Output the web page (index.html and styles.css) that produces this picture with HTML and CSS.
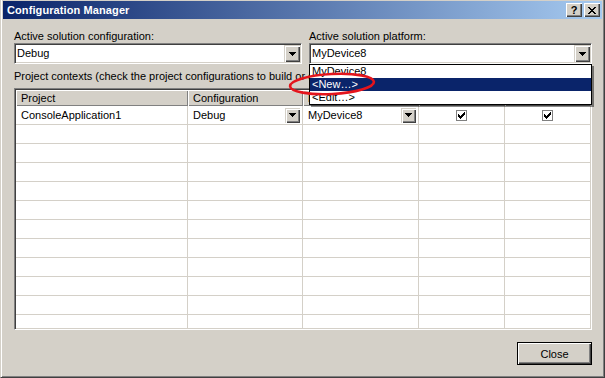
FILE: index.html
```html
<!DOCTYPE html>
<html>
<head>
<meta charset="utf-8">
<link rel="stylesheet" href="styles.css">
</head>
<body>
<div class="window">
  <div class="titlebar">
    <span class="title">Configuration Manager</span>
    <div class="tbtns">
      <span class="tbtn help">?</span>
      <span class="tbtn"><svg width="8" height="7" viewBox="0 0 8 7" shape-rendering="crispEdges"><path d="M0 0h2v1H0zM6 0h2v1H6zM1 1h2v1H1zM5 1h2v1H5zM2 2h4v1H2zM3 3h2v1H3zM2 4h4v1H2zM1 5h2v1H1zM5 5h2v1H5zM0 6h2v1H0zM6 6h2v1H6z" fill="#000"/></svg></span>
    </div>
  </div>
  <div class="content">
    <div class="top">
      <div class="field f-left">
        <div class="lbl">Active solution configuration:</div>
        <div class="combo"><span class="ctext">Debug</span><span class="ddbtn"><svg width="7" height="4" viewBox="0 0 7 4" shape-rendering="crispEdges"><path d="M0 0h7v1H0zM1 1h5v1H1zM2 2h3v1H2zM3 3h1v1H3z" fill="#000"/></svg></span></div>
      </div>
      <div class="field f-right">
        <div class="lbl">Active solution platform:</div>
        <div class="combo"><span class="ctext">MyDevice8</span><span class="ddbtn"><svg width="7" height="4" viewBox="0 0 7 4" shape-rendering="crispEdges"><path d="M0 0h7v1H0zM1 1h5v1H1zM2 2h3v1H2zM3 3h1v1H3z" fill="#000"/></svg></span></div>
      </div>
    </div>
    <div class="ctxlbl">Project contexts (check the project configurations to build or deploy):</div>
    <div class="grid">
      <div class="hcell">Project</div>
      <div class="hcell">Configuration</div>
      <div class="hcell">Platform</div>
      <div class="hcell">Build</div>
      <div class="hcell">Deploy</div>

      <div class="cell">ConsoleApplication1</div>
      <div class="cell cellcombo"><span>Debug</span><span class="ddbtn small"><svg width="7" height="4" viewBox="0 0 7 4" shape-rendering="crispEdges"><path d="M0 0h7v1H0zM1 1h5v1H1zM2 2h3v1H2zM3 3h1v1H3z" fill="#000"/></svg></span></div>
      <div class="cell cellcombo"><span>MyDevice8</span><span class="ddbtn small"><svg width="7" height="4" viewBox="0 0 7 4" shape-rendering="crispEdges"><path d="M0 0h7v1H0zM1 1h5v1H1zM2 2h3v1H2zM3 3h1v1H3z" fill="#000"/></svg></span></div>
      <div class="cell center"><span class="chk"><svg width="9" height="9" viewBox="0 0 9 9" shape-rendering="crispEdges"><path d="M1 3h1v3H1zM2 4h1v3H2zM3 5h1v3H3zM4 4h1v3H4zM5 3h1v3H5zM6 2h1v3H6zM7 1h1v3H7z" fill="#000"/></svg></span></div>
      <div class="cell center"><span class="chk"><svg width="9" height="9" viewBox="0 0 9 9" shape-rendering="crispEdges"><path d="M1 3h1v3H1zM2 4h1v3H2zM3 5h1v3H3zM4 4h1v3H4zM5 3h1v3H5zM6 2h1v3H6zM7 1h1v3H7z" fill="#000"/></svg></span></div>

      <div class="cell"></div><div class="cell"></div><div class="cell"></div><div class="cell"></div><div class="cell"></div>
      <div class="cell"></div><div class="cell"></div><div class="cell"></div><div class="cell"></div><div class="cell"></div>
      <div class="cell"></div><div class="cell"></div><div class="cell"></div><div class="cell"></div><div class="cell"></div>
      <div class="cell"></div><div class="cell"></div><div class="cell"></div><div class="cell"></div><div class="cell"></div>
      <div class="cell"></div><div class="cell"></div><div class="cell"></div><div class="cell"></div><div class="cell"></div>
      <div class="cell"></div><div class="cell"></div><div class="cell"></div><div class="cell"></div><div class="cell"></div>
      <div class="cell"></div><div class="cell"></div><div class="cell"></div><div class="cell"></div><div class="cell"></div>
      <div class="cell"></div><div class="cell"></div><div class="cell"></div><div class="cell"></div><div class="cell"></div>
      <div class="cell"></div><div class="cell"></div><div class="cell"></div><div class="cell"></div><div class="cell"></div>
      <div class="cell"></div><div class="cell"></div><div class="cell"></div><div class="cell"></div><div class="cell"></div>
      <div class="cell"></div><div class="cell"></div><div class="cell"></div><div class="cell"></div><div class="cell"></div>
    </div>
    <div class="footer"><button class="btn">Close</button></div>
  </div>

  <div class="droplist">
    <div class="ditem">MyDevice8</div>
    <div class="ditem sel">&lt;New…&gt;</div>
    <div class="ditem">&lt;Edit…&gt;</div>
  </div>
  <svg class="annot" width="92" height="30" viewBox="0 0 92 30"><ellipse cx="45" cy="14" rx="42" ry="10" transform="rotate(-3 45 14)" fill="none" stroke="#e4141c" stroke-width="2.6"/></svg>
</div>
</body>
</html>
```

FILE: styles.css
```css
* { box-sizing: border-box; }
html, body { margin: 0; padding: 0; }
body {
  width: 605px;
  height: 378px;
  overflow: hidden;
  background: #d4d0c8;
  font-family: "Liberation Sans", Arial, sans-serif;
  font-size: 11px;
  color: #000;
}
.window {
  position: relative;
  width: 605px;
  height: 378px;
  background: #d4d0c8;
  border: 1px solid;
  border-top-width: 0;
  border-color: #d4d0c8 #404040 #404040 #d4d0c8;
  box-shadow: inset 1px 0 #fff, inset -1px -1px #808080;
  padding: 1px 2px 2px 2px;
  display: flex;
  flex-direction: column;
}
.titlebar {
  height: 18px;
  background: linear-gradient(to right, #0a246a, #a6caf0);
  display: flex;
  align-items: center;
  justify-content: space-between;
  padding: 0 2px 0 4px;
}
.title {
  color: #fff;
  font-weight: bold;
  font-size: 11px;
  letter-spacing: 0.1px;
}
.tbtns { display: flex; gap: 2px; }
.tbtn {
  width: 16px;
  height: 14px;
  background: #d4d0c8;
  box-shadow: inset 1px 1px #fff, inset -1px -1px #404040, inset -2px -2px #808080;
  display: flex;
  align-items: center;
  justify-content: center;
  font-weight: bold;
  font-size: 11px;
  line-height: 14px;
}
.tbtn.help { padding-top: 0; }
.content {
  padding: 11px 10px 0 11px;
  display: flex;
  flex-direction: column;
  flex: 1;
}
.top { display: flex; gap: 7px; }
.f-left { width: 288px; }
.f-right { flex: 1; }
.lbl { line-height: 13px; height: 13px; }
.combo {
  height: 21px;
  background: #fff;
  border: 1px solid;
  border-color: #808080 #fff #fff #808080;
  box-shadow: inset 1px 1px #404040, inset -1px -1px #d4d0c8;
  display: flex;
  align-items: center;
  justify-content: space-between;
  padding: 1px 1px 1px 2px;
}
.ctext { line-height: 13px; }
.ddbtn {
  width: 16px;
  height: 17px;
  background: #d4d0c8;
  box-shadow: inset 1px 1px #d4d0c8, inset 2px 2px #fff, inset -1px -1px #404040, inset -2px -2px #808080;
  display: flex;
  align-items: center;
  justify-content: center;
}
.ddbtn svg { display: block; }
.ddbtn.small { width: 15px; height: 15px; }
.ctxlbl { margin-top: 6px; line-height: 13px; height: 13px; white-space: nowrap; }
.grid {
  margin-top: 5px;
  height: 242px;
  overflow: hidden;
  background: #fff;
  border: 1px solid;
  border-color: #808080 #fff #fff #808080;
  box-shadow: inset 1px 1px #404040, inset -1px -1px #d4d0c8;
  padding: 1px;
  display: grid;
  grid-template-columns: 172px 115px 116px 86px 1fr;
  grid-auto-rows: 19px;
  grid-template-rows: 16px;
  align-content: start;
}
.hcell {
  background: #d4d0c8;
  box-shadow: inset 1px 1px #fff, inset -1px -1px #808080;
  padding-left: 5px;
  line-height: 16px;
  white-space: nowrap;
}
.cell {
  border-right: 1px solid #d4d0c8;
  border-bottom: 1px solid #d4d0c8;
  padding-left: 5px;
  line-height: 18px;
  white-space: nowrap;
  display: flex;
  align-items: center;
}
.cell:nth-child(5n) { border-right: 0; }
.cellcombo { justify-content: space-between; padding-right: 2px; }
.center { justify-content: center; padding-left: 0; }
.chk {
  width: 11px;
  height: 11px;
  border: 1px solid #808080;
  background: #fff;
  display: flex;
  align-items: center;
  justify-content: center;
}
.chk svg { display: block; }
.footer {
  margin-top: 12px;
  display: flex;
  justify-content: flex-end;
}
.btn {
  width: 75px;
  height: 23px;
  border: 1px solid #000;
  background: #d4d0c8;
  box-shadow: inset 1px 1px #fff, inset -1px -1px #404040, inset -2px -2px #808080;
  font-family: "Liberation Sans", Arial, sans-serif;
  font-size: 11px;
  color: #000;
  padding: 0;
}
.droplist {
  position: absolute;
  left: 308px;
  top: 64px;
  width: 283px;
  background: #fff;
  border: 1px solid #000;
  box-shadow: 2px 2px 0 rgba(0,0,0,0.45);
}
.ditem {
  height: 13px;
  line-height: 13px;
  padding-left: 2px;
  white-space: nowrap;
}
.ditem.sel { background: #0a246a; color: #fff; }
.annot {
  position: absolute;
  left: 286px;
  top: 70px;
}
```
